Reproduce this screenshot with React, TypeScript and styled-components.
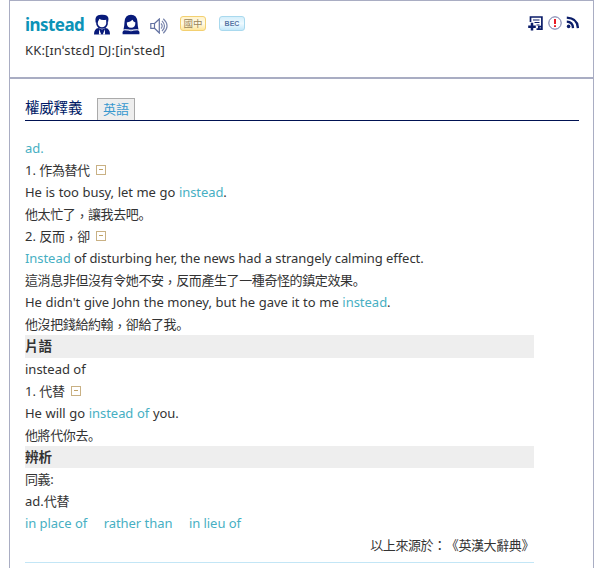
import React from 'react';
import styled, { createGlobalStyle } from 'styled-components';

const GlobalStyle = createGlobalStyle`
  * { box-sizing: border-box; }
  body {
    margin: 0;
    background: #fff;
    color: #333;
    font: 13px/22px "Noto Sans", "Noto Sans CJK TC", sans-serif;
    overflow: hidden;
  }
`;

const Page = styled.main`
  width: 585px;
  height: 568px;
  margin-left: 9px;
  overflow: hidden;
`;

const Header = styled.header`
  height: 78px;
  padding: 12px 14px 0 15px;
  border: 1px solid #a9adc3;
`;

const TitleRow = styled.div`
  display: flex;
  align-items: center;
  height: 24px;
`;

const Word = styled.h1`
  width: 68px;
  margin: 0;
  color: #0c93b7;
  font-size: 17px;
  line-height: 24px;
  letter-spacing: -0.55px;
`;

const Icon = styled.svg<{ $gap?: number; $drop?: number }>`
  display: block;
  flex: none;
  margin-right: ${(p) => p.$gap ?? 0}px;
  margin-top: ${(p) => p.$drop ?? 0}px;
`;

const Badge = styled.span<{ $tone: 'gold' | 'blue' }>`
  flex: none;
  width: 26px;
  height: 15px;
  margin: -3px 13px 0 0;
  border: 1px solid ${(p) => (p.$tone === 'gold' ? '#f3d071' : '#a9d9ee')};
  border-radius: 3px;
  background: ${(p) =>
    p.$tone === 'gold'
      ? 'linear-gradient(#fff3cd, #fffbe8 50%, #ffe69b)'
      : 'linear-gradient(#d5effb, #effaff 50%, #c4e8fa)'};
  color: ${(p) => (p.$tone === 'gold' ? '#9b8659' : '#5876a5')};
  font: ${(p) =>
    p.$tone === 'gold'
      ? '9.5px/12px "Noto Sans CJK TC", sans-serif'
      : 'bold 7px/13px "Liberation Sans", sans-serif'};
  text-align: center;
`;

const Tools = styled.div`
  display: flex;
  align-items: center;
  margin: -4px 0 0 auto;
`;

const Phonetic = styled.div`
  height: 22px;
  margin-top: 2px;
  font-size: 13px;
  letter-spacing: 0.17px;
`;

const Body = styled.section`
  height: 600px;
  padding: 19px 14px 0 15px;
  border: 1px solid #a9adc3;
`;

const TabBar = styled.div`
  display: flex;
  height: 23px;
  border-bottom: 1px solid #001252;
`;

const TabTitle = styled.h2`
  width: 72px;
  margin: 0;
  color: #001a66;
  font-size: 14.5px;
  font-weight: 400;
  line-height: 18px;
  letter-spacing: -0.2px;
`;

const Tab = styled.span`
  width: 38px;
  height: 22px;
  border: 1px solid #aaa;
  border-bottom: 0;
  background: #eee;
  color: #3798cf;
  line-height: 21px;
  text-align: center;
`;

const Entry = styled.article`
  width: 509px;
  height: 442px;
  padding-top: 16px;
  border-bottom: 1px solid #c3e6f6;
`;

const Line = styled.div<{ $spacing?: number; $words?: number; $end?: boolean }>`
  height: 22px;
  white-space: pre;
  letter-spacing: ${(p) => p.$spacing ?? 0}px;
  word-spacing: ${(p) => p.$words ?? 0}px;
  text-align: ${(p) => (p.$end ? 'right' : 'left')};
`;

const SectionBar = styled.h3<{ $height?: number }>`
  height: ${(p) => p.$height ?? 22}px;
  margin: 0;
  background: #eee;
  font-size: 13.5px;
  line-height: 22px;
`;

const Han = styled.span`
  letter-spacing: -0.4px;
  text-spacing-trim: space-all;
`;

const Stop = styled.span`
  font-family: "Noto Sans CJK SC", sans-serif;
`;

const Comma = styled.span`
  line-height: 1;
  vertical-align: -2px;
`;

const Link = styled.span`
  color: #47afc3;
`;

const Synonyms = styled.div`
  display: flex;
  gap: 16.5px;
  height: 22px;
  color: #47afc3;
  letter-spacing: -0.05px;
`;

const Toggle = styled.span`
  display: inline-flex;
  align-items: center;
  justify-content: center;
  width: 10px;
  height: 10px;
  margin-left: 6px;
  vertical-align: 5px;
  border: 1px solid #c9b184;
  &::before {
    content: "";
    width: 4px;
    height: 1px;
    background: #c0a267;
  }
`;

const ManIcon = () => (
  <Icon width="18" height="21" viewBox="0 0 18 21" $gap={11} $drop={-1}>
    <path d="M4 6v4q1 4 5 4t5-4V6" fill="#fff" stroke="#081a7a" strokeWidth="1.6" />
    <path d="M2.6 8.5Q1 1 8 .7q7.5-.6 7.5 4.3L15 8.5l-1.7-2.7Q8 6.5 6.5 4.8L4.5 8.5z" fill="#081a7a" />
    <path d="M1 20.5q0-6 4.5-6.5L9 15.5l3.5-1.5Q17 14.5 17 20.5z" fill="#081a7a" />
    <path d="M6.2 15.3l2 5.2H5.9zM11.8 15.3l-2 5.2h2.3z" fill="#fff" />
  </Icon>
);

const WomanIcon = () => (
  <Icon width="18" height="21" viewBox="0 0 18 21" $gap={10} $drop={-1}>
    <path d="M1.5 15.5Q2.4 12 2.5 8 3 .8 9 .8t6.5 7.2q.1 4 1 7.5z" fill="#081a7a" />
    <path d="M4.8 8.4q4-.2 5.7-2.6.7 2.2 2.9 2.6 0 5.3-4.3 5.3T4.8 8.4z" fill="#fff" />
    <path d="M.6 20.3v-2.1q0-2 4.4-2.4h8q4.4.4 4.4 2.4v2.1z" fill="#081a7a" />
    <path d="M2.5 15.8q4 .1 6.5 1 2.5-.9 6.5-1" fill="none" stroke="#fff" strokeWidth=".9" />
  </Icon>
);

const SpeakerIcon = () => (
  <Icon width="18" height="16" viewBox="0 0 18 16" $gap={12} $drop={2}>
    <path d="M.8 5.5h3.7v4.8H.8zM4.5 5.5L9.3 1v14l-4.8-4.7" fill="#fff" stroke="#6372a2" strokeWidth="1.2" />
    <path d="M11 5.5q2.4 2.5 0 5M12 2.8q5 5.2 0 10.4M13.3.8q7.5 7.2 0 14.4" fill="none" stroke="#7985ac" strokeWidth="1.2" />
  </Icon>
);

const AddIcon = () => (
  <Icon width="15" height="15" viewBox="0 0 15 15" $gap={5}>
    <path d="M2.5 6V1h11.4v12.2H8.5M10.8 13v-2.3h3.1" fill="none" stroke="#0b1d69" strokeWidth="1.7" />
    <path d="M5 4h6.5M6.5 6.5h5M8.5 9h3" stroke="#0b1d69" strokeWidth="1.2" />
    <path d="M4 6.8v7.8M.2 10.7h7.6" stroke="#0b1d69" strokeWidth="2.5" />
  </Icon>
);

const AlertIcon = () => (
  <Icon width="14" height="14" viewBox="0 0 14 14" $gap={4}>
    <circle cx="7" cy="7" r="6.2" fill="#fff" stroke="#6a70a2" />
    <path d="M7 3v5M7 9.2v1.9" stroke="#e91c25" strokeWidth="2" />
  </Icon>
);

const FeedIcon = () => (
  <Icon width="13" height="13" viewBox="0 0 13 13" $drop={-1}>
    <circle cx="2.6" cy="10.4" r="1.8" fill="#0b1d69" />
    <path d="M.8 5.7q6 .2 6.2 6.4M.8 1.7q10.8.6 11.1 10.4" fill="none" stroke="#0b1d69" strokeWidth="2.3" />
  </Icon>
);

export default function App() {
  return (
    <>
      <GlobalStyle />
      <Page>
        <Header>
          <TitleRow>
            <Word>instead</Word>
            <ManIcon />
            <WomanIcon />
            <SpeakerIcon />
            <Badge $tone="gold">國中</Badge>
            <Badge $tone="blue">BEC</Badge>
            <Tools>
              <AddIcon />
              <AlertIcon />
              <FeedIcon />
            </Tools>
          </TitleRow>
          <Phonetic>KK:[ɪnˈstɛd] DJ:[inˈsted]</Phonetic>
        </Header>
        <Body>
          <TabBar>
            <TabTitle>權威釋義</TabTitle>
            <Tab>英語</Tab>
          </TabBar>
          <Entry>
            <Line><Link>ad.</Link></Line>
            <Line>1. <Han>作為替代</Han><Toggle /></Line>
            <Line $spacing={-0.08} $words={0.4}>He is too busy, let me go <Link>instead</Link>.</Line>
            <Line><Han>他太忙了<Comma>，</Comma>讓我去吧<Stop>。</Stop></Han></Line>
            <Line>2. <Han>反而<Comma>，</Comma>卻</Han><Toggle /></Line>
            <Line $spacing={-0.06}><Link>Instead</Link> of disturbing her, the news had a strangely calming effect.</Line>
            <Line><Han>這消息非但沒有令她不安<Comma>，</Comma>反而產生了一種奇怪的鎮定效果<Stop>。</Stop></Han></Line>
            <Line $spacing={-0.02} $words={0.25}>He didn't give John the money, but he gave it to me <Link>instead</Link>.</Line>
            <Line><Han>他沒把錢給約翰<Comma>，</Comma>卻給了我<Stop>。</Stop></Han></Line>
            <SectionBar $height={23}>片語</SectionBar>
            <Line>instead of</Line>
            <Line>1. <Han>代替</Han><Toggle /></Line>
            <Line $spacing={-0.06} $words={0.4}>He will go <Link>instead of</Link> you.</Line>
            <Line><Han>他將代你去<Stop>。</Stop></Han></Line>
            <SectionBar>辨析</SectionBar>
            <Line><Han>同義</Han>:</Line>
            <Line>ad.<Han>代替</Han></Line>
            <Synonyms>
              <span>in place of</span>
              <span>rather than</span>
              <span>in lieu of</span>
            </Synonyms>
            <Line $end><Han>以上來源於：《英漢大辭典》</Han></Line>
          </Entry>
        </Body>
      </Page>
    </>
  );
}
